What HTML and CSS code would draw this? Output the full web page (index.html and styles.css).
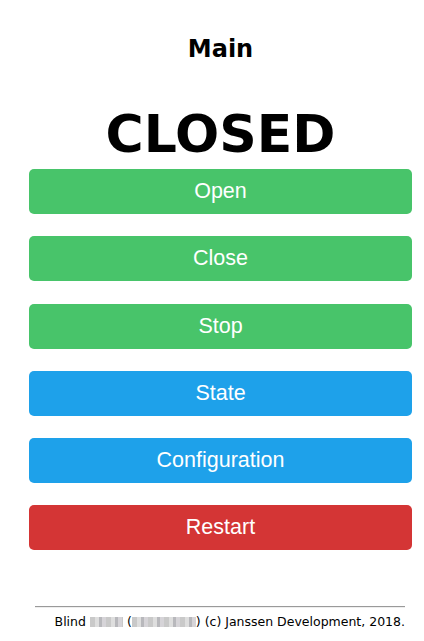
FILE: index.html
```html
<!DOCTYPE html>
<html>
<head>
<meta charset="utf-8">
<link rel="stylesheet" href="styles.css">
</head>
<body>
<div class="page">
  <h1 class="title">Main</h1>
  <div class="state">CLOSED</div>
  <div class="buttons">
    <button class="btn green">Open</button>
    <button class="btn green">Close</button>
    <button class="btn green">Stop</button>
    <button class="btn blue">State</button>
    <button class="btn blue">Configuration</button>
    <button class="btn red">Restart</button>
  </div>
  <div class="footer">
    <hr class="rule">
    <div class="credit">Blind <span class="blur b1"></span> (<span class="blur b2"></span>) (c) Janssen Development, 2018.</div>
  </div>
</div>
</body>
</html>
```
FILE: styles.css
```css
html, body { margin: 0; padding: 0; background: #fff; }
.page {
  padding: 0 12px 0 29px;
  font-family: "DejaVu Sans", Verdana, sans-serif;
  color: #000;
}
.title {
  margin: 0;
  padding-top: 34px;
  text-align: center;
  font-size: 24px;
  font-weight: bold;
  line-height: 30px;
}
.state {
  margin-top: 42px;
  text-align: center;
  font-size: 52px;
  font-weight: bold;
  line-height: 56px;
}
.buttons {
  display: flex;
  flex-direction: column;
  gap: 22.3px;
  margin-top: 7px;
}
.btn {
  height: 45px;
  border: none;
  border-radius: 5px;
  color: #fff;
  font-family: "Liberation Sans", Arial, sans-serif;
  font-size: 21.5px;
  padding: 0;
  width: 100%;
}
.green { background: #48c46a; }
.blue { background: #1ea1ea; }
.red { background: #d43535; }
.footer { margin-top: 56px; padding: 0 7px 0 6px; }
.rule {
  margin: 0;
  border: none;
  border-top: 1px solid #9a9a9a;
  border-bottom: 1px solid #eee;
}
.credit {
  text-align: right;
  font-size: 12.5px;
  margin-top: 6px;
  line-height: 15px;
}
.blur {
  display: inline-block;
  height: 10px;
  vertical-align: -1px;
  background: repeating-linear-gradient(90deg, #c9c9c9 0 5px, #dedede 5px 9px, #b8b8bc 9px 12px, #d6d4d8 12px 16px);
}
.b1 { width: 33px; }
.b2 { width: 64px; }
```
